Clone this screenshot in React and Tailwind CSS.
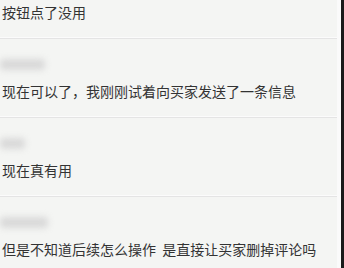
const items = [
  { name: null, text: '按钮点了没用' },
  { name: 45, text: '现在可以了，我刚刚试着向买家发送了一条信息' },
  { name: 25, text: '现在真有用' },
  { name: 48, text: '但是不知道后续怎么操作  是直接让买家删掉评论吗' },
];

function Divider() {
  return (
    <div>
      <div className="h-px bg-[#fbfbfb]" />
      <div className="h-px bg-[#e4e4e4]" />
    </div>
  );
}

export default function App() {
  return (
    <div
      className="flex h-[268px] w-[344px] overflow-hidden bg-[#f4f5f3] text-[#333333]"
      style={{ fontFamily: '"Noto Sans CJK SC", "Noto Sans", sans-serif' }}
    >
      <div className="flex-1 flex flex-col">
        {items.map((item, i) => (
          <div key={i}>
            {item.name && (
              <div className="pt-[20px]">
                <div
                  className="h-[11px] rounded-sm bg-[#d9d9d9] blur-[3px]"
                  style={{ width: item.name }}
                />
              </div>
            )}
            <div
              className={
                'pl-[2px] text-[14px] leading-[20px] whitespace-pre pb-[15px] ' +
                (item.name ? 'mt-[11px]' : 'mt-[2px]')
              }
            >
              {item.text}
            </div>
            {i < items.length - 1 && <Divider />}
          </div>
        ))}
      </div>
      <div className="w-[4px] bg-[#fafafa]" />
      <div className="w-[3px] bg-[#1a1a1a]" />
    </div>
  );
}
